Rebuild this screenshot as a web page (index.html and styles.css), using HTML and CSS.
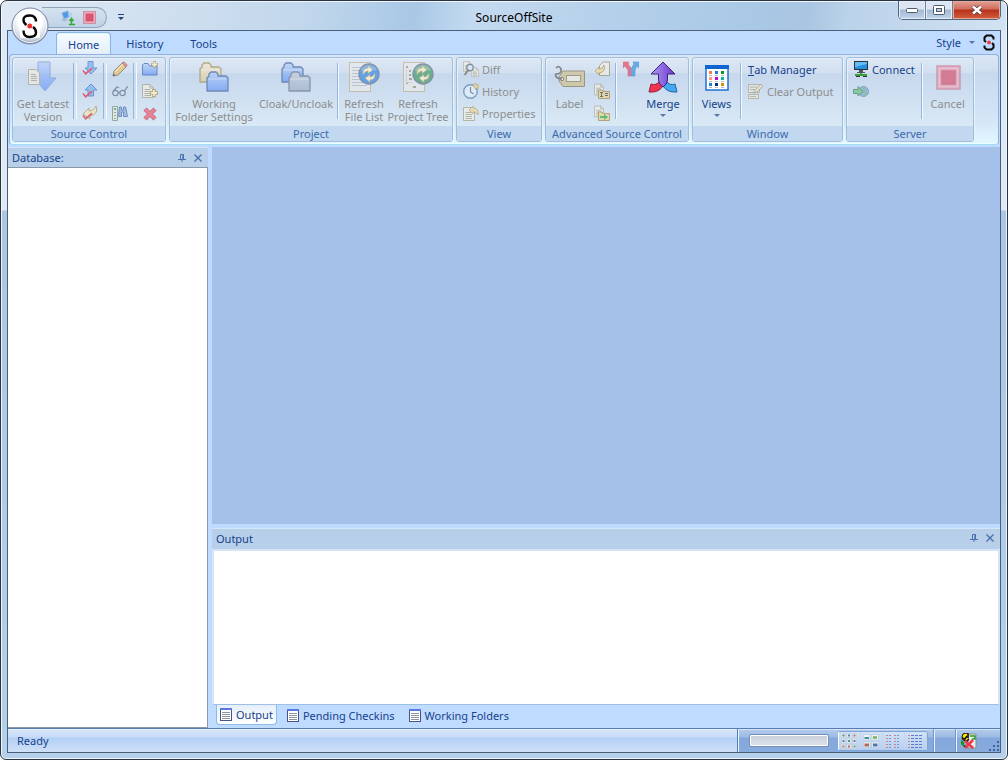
FILE: index.html
```html
<!DOCTYPE html>
<html lang="en">
<head>
  <meta charset="UTF-8" />
  <meta name="viewport" content="width=device-width, initial-scale=1.0" />
  <title>SourceOffSite</title>
  <link rel="stylesheet" href="styles.css">
</head>
<body>
  <!-- shared icons -->
  <svg class="defs" aria-hidden="true">
    <defs>
      <linearGradient id="g-blue" x1="0" y1="0" x2="0" y2="1"><stop offset="0" stop-color="#b8d0fa"/><stop offset="1" stop-color="#6797f6"/></linearGradient>
      <linearGradient id="g-tan" x1="0" y1="0" x2="0" y2="1"><stop offset="0" stop-color="#f3e9cf"/><stop offset="1" stop-color="#e2cd9b"/></linearGradient>
      <linearGradient id="g-gray" x1="0" y1="0" x2="0" y2="1"><stop offset="0" stop-color="#c6cedb"/><stop offset="1" stop-color="#a0afc4"/></linearGradient>
      <linearGradient id="g-purple" x1="0" y1="0" x2="1" y2="0"><stop offset="0" stop-color="#b09af5"/><stop offset="1" stop-color="#6a35c9"/></linearGradient>
      <radialGradient id="g-orb" cx=".5" cy=".35" r=".65"><stop offset=".5" stop-color="#ffffff"/><stop offset=".8" stop-color="#d3dae6"/><stop offset="1" stop-color="#8794ab"/></radialGradient>
      <symbol id="i-s" viewBox="0 0 12 17">
        <path d="M10.500 5.500V3.500L8.500 1.500H3.500L1.500 3.500V6.500L3 8M1.500 11.500V13.500L3.500 15.500H8.500L10.500 13.500V10.500L9 9" fill="none" stroke="#0a0a0a" stroke-width="2"/>
        <circle cx="6" cy="8.500" r="1.900" fill="#ee3b3b"/>
      </symbol>
      <symbol id="i-page" viewBox="0 0 12 14">
        <path d="M.5.5H8L11.500 4V13.500H.5Z" fill="#f1efe6" stroke="#a69f86"/>
        <path d="M8 .5V4H11.500M2.500 5.500H8M2.500 7.500H9M2.500 9.500H9M2.500 11.500H9" fill="none" stroke="#a19e86"/>
      </symbol>
      <symbol id="i-folder" viewBox="0 0 23 21">
        <path d="M1 20V7L3 5V3L5 1H10L12 3V5H20L22 7V20Z" stroke-width="1.300" stroke-linejoin="round"/>
        <path d="M2.500 8H20.500" fill="none" stroke="#fff" stroke-opacity=".5"/>
      </symbol>
      <symbol id="i-check" viewBox="0 0 12 8">
        <path d="M1 3.500L4 7L11 1" fill="none" stroke="#e02c48" stroke-width="1.800"/>
      </symbol>
      <symbol id="i-pin" viewBox="0 0 8 8">
        <path d="M0 5.500H8M2.500 5V.5H5.500V5M4.800.5V5M4 5.500V8" fill="none" stroke="#4a70ad"/>
      </symbol>
      <symbol id="i-x" viewBox="0 0 8 8">
        <path d="M.5.5L7.500 7.500M7.500.5L.5 7.500" fill="none" stroke="#4a70ad" stroke-width="1.400"/>
      </symbol>
      <symbol id="i-list" viewBox="0 0 12 13">
        <rect x=".5" y=".5" width="11" height="12" fill="#fff" stroke="#41558c"/>
        <path d="M0 1H12" stroke="#5878df" stroke-width="2"/>
        <path d="M2 4.500H10M2 6.500H10M2 8.500H10M2 10.500H10" stroke="#8f939b"/>
      </symbol>
      <symbol id="i-stop" viewBox="0 0 26 26">
        <rect x="1" y="1" width="24" height="24" fill="#e8a1b3" stroke="#cc7f96" stroke-width="1.500"/>
        <rect x="4" y="4" width="18" height="18" fill="#dd7088" stroke="#f3d0da"/>
        <rect x="6.500" y="6.500" width="13" height="13" fill="#d95570" stroke="#cf4c68"/>
      </symbol>
      <symbol id="i-cycle" viewBox="0 0 22 22">
        <circle cx="11" cy="11" r="10" stroke="#65718a" stroke-width="1.400"/>
        <path d="M3.500 7.500Q11 0 18 7" fill="none" stroke="#fff" stroke-opacity=".25" stroke-width="3"/>
        <path d="M5 12Q4 5 10 5V2.500L15 7L10 10.500V8Q7 8 5 12ZM17 10Q18 17 12 17V19.500L7 15L12 11.500V14Q15 14 17 10Z" fill="#fbeec9" stroke="#ab9560" stroke-width=".7"/>
      </symbol>
    </defs>
  </svg>

  <div class="window">
    <header class="titlebar">
      <div class="title-left">
        <div class="quick-access">
          <button class="qat-btn" aria-label="Connect">
            <svg width="16" height="16" viewBox="0 0 16 16"><path d="M2 3L8 1L9 7L4 9Z" fill="#4f9be6" stroke="#86b5e0"/><path d="M1 9L6 8L8 10L4 12Z" fill="#a9bdd6"/><path d="M8 2L12 3L12 8L9 7Z" fill="#b7cfe9"/><path d="M11.500 14V9M9.500 11L11.500 8.500L13.500 11M9 14.500H15" fill="none" stroke="#35a83a" stroke-width="1.500"/></svg>
          </button>
          <button class="qat-btn" aria-label="Cancel"><svg width="13" height="13"><use href="#i-stop"/></svg></button>
        </div>
        <button class="qat-more" aria-label="Customize"><svg width="6" height="6" viewBox="0 0 6 6"><path d="M0 0H6V1H0ZM0 3H6L3 6Z" fill="#26447d"/></svg></button>
      </div>
      <h1 class="title">SourceOffSite</h1>
      <div class="window-buttons">
        <button aria-label="Minimize"><svg width="12" height="6" viewBox="0 0 12 6"><rect x=".5" y="1.500" width="11" height="4" rx="1" fill="#fff" stroke="#4d5a6c"/></svg></button>
        <button aria-label="Maximize"><svg width="12" height="10" viewBox="0 0 12 10"><rect x=".5" y=".5" width="11" height="9" rx="1" fill="#fff" stroke="#4d5a6c"/><rect x="3.500" y="3.500" width="5" height="3" fill="#b9cfe7" stroke="#4d5a6c"/></svg></button>
        <button class="close" aria-label="Close"><svg width="12" height="10" viewBox="0 0 12 10"><path d="M2 1.500L10 8.500M10 1.500L2 8.500" stroke="#5b3a41" stroke-width="4"/><path d="M2 1.500L10 8.500M10 1.500L2 8.500" stroke="#fff" stroke-width="2.500"/></svg></button>
      </div>
    </header>

    <button class="orb" aria-label="Application menu">
      <svg width="38" height="38" viewBox="0 0 38 38"><circle cx="19" cy="19" r="18" fill="url(#g-orb)" stroke="#7786a3"/><circle cx="19" cy="19" r="16.500" fill="none" stroke="#fff" stroke-opacity=".8"/><rect x="9" y="8" width="20" height="23" fill="#fff"/><path d="M25 14.500Q25 8.500 19 8.500Q12.500 8.500 12.500 13Q12.500 16 15.500 18M12.500 23.500Q12.500 30 18.500 30Q25 30 25 25.500Q25 22 22 20" fill="none" stroke="#080808" stroke-width="2.400"/><circle cx="18.800" cy="19" r="2.500" fill="#ec3030"/></svg>
    </button>

    <div class="client">
      <nav class="tabs">
        <button class="tab active">Home</button>
        <button class="tab">History</button>
        <button class="tab">Tools</button>
        <button class="style-menu">Style <span class="arrow"></span></button>
        <svg class="brand" width="12" height="17"><use href="#i-s"/></svg>
      </nav>

      <div class="ribbon">
        <section class="group source-group">
          <div class="group-body">
            <button class="big w-60" disabled>
              <svg width="32" height="32" viewBox="0 0 32 32"><path d="M11 1H23V17H29L18 30L7 17H11Z" fill="url(#g-blue)" stroke="#7895d2"/><path d="M1.500 8.500H9L12.500 12V23.500H1.500Z" fill="#eeece3" stroke="#aaa289"/><path d="M4 13.500H9M4 15.500H10M4 17.500H10M4 19.500H10" stroke="#a6a492"/></svg>
              Get Latest<br>Version
            </button>
            <div class="stack">
              <button class="small" aria-label="Check Out" disabled><svg width="16" height="16" viewBox="0 0 16 16"><path d="M6 .5H11V7H15L9 13L3 7H6Z" fill="#7db1f0" stroke="#3f78c5"/><use href="#i-check" y="6" width="11" height="8"/></svg></button>
              <button class="small" aria-label="Check In" disabled><svg width="16" height="16" viewBox="0 0 16 16"><path d="M9 1L15 7H11.500V13H6V7H3Z" fill="#7db1f0" stroke="#3f78c5"/><use href="#i-check" y="7" width="11" height="8"/></svg></button>
              <button class="small" aria-label="Undo Check Out" disabled><svg width="16" height="16" viewBox="0 0 16 16"><path d="M1 9L7 3V6Q12 6 14 1Q17 9 8 11V14Z" fill="#f6e5b5" stroke="#a8935b"/><use href="#i-check" y="7" width="11" height="8"/></svg></button>
            </div>
            <div class="stack">
              <button class="small" aria-label="Edit" disabled><svg width="16" height="16" viewBox="0 0 16 16"><path d="M1 15L2 10L10 2L14 6L6 14Z" fill="#e8bf6b" stroke="#84714b"/><path d="M10 2L12 .8L15.200 4L14 6Z" fill="#df7376" stroke="#9e5e60"/><path d="M3 11L11 3" stroke="#fff3cc"/><path d="M1 15L1.500 12.500L3.500 14.500Z" fill="#333"/></svg></button>
              <button class="small" aria-label="View" disabled><svg width="16" height="16" viewBox="0 0 16 16" fill="none" stroke="#5c6d87" stroke-width="1.200"><circle cx="3.500" cy="10" r="2.700"/><circle cx="10.500" cy="10" r="2.700"/><path d="M6.200 9.500Q7 8.500 7.800 9.500M1 8.500L5 4L7 4.500M12.500 8L15 4L15.500 5"/></svg></button>
              <button class="small" aria-label="Find" disabled><svg width="16" height="16" viewBox="0 0 16 16"><path d="M.5 1.500H5.500V15.500H.5Z" fill="#e4ecdf" stroke="#7b8a82"/><path d="M2 4H4" stroke="#2dac50" stroke-width="2"/><path d="M2 7.500H4M2 10.500H4M2 13.500H4" stroke="#7b8a82"/><path d="M7.500 2H9.500V5H11.500V2H13.500L15.500 11.500H11.500V7H9.500V11.500H6.500Z" fill="#86ace5" stroke="#4b68a0"/></svg></button>
            </div>
            <div class="stack">
              <button class="small" aria-label="New Project" disabled><svg width="16" height="16" viewBox="0 0 16 16"><path d="M.5 14V4L2 2.500H6L7.500 5H15V14Z" fill="url(#g-blue)" stroke="#3b63b8"/><path d="M12.500 0V7M9 3.500H16" stroke="#a48c4b" stroke-width="2.500"/><path d="M12.500 1V6M10 3.500H15" stroke="#fff4c8" stroke-width="1.500"/></svg></button>
              <button class="small" aria-label="Add Files" disabled><svg width="16" height="16" viewBox="0 0 16 16"><use href="#i-page" x="0" y="1" width="12" height="14"/><path d="M12 6V14M8 10H16" stroke="#a68c4b" stroke-width="3.500"/><path d="M12 7V13M9 10H15" stroke="#fff0bd" stroke-width="1.800"/></svg></button>
              <button class="small" aria-label="Delete" disabled><svg width="16" height="16" viewBox="0 0 16 16"><path d="M3 4L13 14M13 4L3 14" stroke="#c93f53" stroke-width="4.500"/><path d="M3.500 4.500L12.500 13.500M12.500 4.500L3.500 13.500" stroke="#ee5c6e" stroke-width="2.500"/></svg></button>
            </div>
          </div>
          <h2 class="caption">Source Control</h2>
        </section>

        <section class="group project-group">
          <div class="group-body">
            <button class="big w-88" disabled>
              <svg width="32" height="32" viewBox="0 0 32 32"><use href="#i-folder" x="1" y="1" width="23" height="21" fill="url(#g-tan)" stroke="#a6925a"/><use href="#i-folder" x="8" y="10" width="23" height="21" fill="url(#g-blue)" stroke="#44659f"/></svg>
              Working<br>Folder Settings
            </button>
            <button class="big w-78" disabled>
              <svg width="32" height="32" viewBox="0 0 32 32"><use href="#i-folder" x="1" y="1" width="23" height="21" fill="url(#g-blue)" stroke="#44659f"/><use href="#i-folder" x="8" y="10" width="23" height="21" fill="url(#g-gray)" stroke="#6a788f"/></svg>
              Cloak/Uncloak
            </button>
            <span class="sep"></span>
            <button class="big w-50" disabled>
              <svg width="32" height="32" viewBox="0 0 32 32"><rect x="1.500" y="1.500" width="21" height="29" fill="#e9eaeb" stroke="#beb28f"/><path d="M4 6.500H14M4 9.500H12M4 12.500H12M4 15.500H13M4 18.500H19M4 21.500H19M4 24.500H19" stroke="#b3bbc6"/><use href="#i-cycle" x="10" y="2" width="22" height="22" fill="#328be9"/></svg>
              Refresh<br>File List
            </button>
            <button class="big w-58" disabled>
              <svg width="32" height="32" viewBox="0 0 32 32"><rect x="1.500" y="1.500" width="21" height="29" fill="#e9eaeb" stroke="#beb28f"/><path d="M4 6H6M7 10H9M7 14H9M7 18H10M4 22H6M11 26H14" stroke="#999574" stroke-width="2"/><path d="M4.500 8V21.500H10" fill="none" stroke="#ccc"/><use href="#i-cycle" x="10" y="2" width="22" height="22" fill="#3f9e6a"/></svg>
              Refresh<br>Project Tree
            </button>
          </div>
          <h2 class="caption">Project</h2>
        </section>

        <section class="group view-group">
          <div class="group-body">
            <div class="rows">
              <button class="row" disabled><svg width="16" height="16" viewBox="0 0 16 16"><use href="#i-page" width="9" height="11"/><use href="#i-page" x="8" y="6" width="8" height="10"/><circle cx="7" cy="6.500" r="3.200" fill="#dceafa" stroke="#5a6778" stroke-width="1.300"/><path d="M5 9.500L1.500 14" stroke="#6d6758" stroke-width="2"/></svg>Diff</button>
              <button class="row" disabled><svg width="16" height="16" viewBox="0 0 16 16"><circle cx="7.500" cy="8.500" r="6.800" fill="#e4f1fc" stroke="#5b84ad" stroke-width="1.400"/><path d="M7.500 4V9L10.500 11" fill="none" stroke="#516b88" stroke-width="1.200"/><path d="M10 1.500L13 0V2H16V5H13V7Z" fill="#f0d282" stroke="#a98f50" stroke-width=".7"/></svg>History</button>
              <button class="row" disabled><svg width="16" height="16" viewBox="0 0 16 16"><use href="#i-page" x="0" y="2" width="12" height="14"/><path d="M6 5L10 1V3Q16 3 15 10Q13 6 10 7V9Z" fill="#f0d896" stroke="#a98f50" stroke-width=".8"/></svg>Properties</button>
            </div>
          </div>
          <h2 class="caption">View</h2>
        </section>

        <section class="group advanced-group">
          <div class="group-body">
            <button class="big w-46" disabled>
              <svg width="32" height="32" viewBox="0 0 32 32"><path d="M5 16L9 10H30.500V25.500H9L5 20Z" fill="#d1c08f" stroke="#847956"/><rect x="12.500" y="14.500" width="14" height="6" fill="#f2eee0" stroke="#8d8262"/><circle cx="8" cy="18" r="1.700" fill="#f6f3e9" stroke="#73644b"/><path d="M8 18Q0 17 2 13Q8 13 7 8Q5 4 2 7" fill="none" stroke="#606163" stroke-width="1.700"/></svg>
              Label
            </button>
            <div class="stack plain">
              <button class="small" aria-label="Share" disabled><svg width="16" height="16" viewBox="0 0 16 16"><path d="M5.500 4.500L9 1H15.500V14.500H5.500Z" fill="#efede4" stroke="#96927a"/><path d="M1 10L5 6V8Q9 8 10 4Q12 11 5 12V14Z" fill="#f0d896" stroke="#a08646" stroke-width=".8"/></svg></button>
              <button class="small" aria-label="Rename" disabled><svg width="16" height="16" viewBox="0 0 16 16"><use href="#i-page" width="10" height="13"/><path d="M4.500 15.500V7H8L9 8.500H15.500V15.500Z" fill="#ead08c" stroke="#a08a4b"/><path d="M6 9.500H9M7.500 9.500V13.500M6 13.500H9M11 10.500H14M11 12.500H14" stroke="#444"/></svg></button>
              <button class="small" aria-label="Move" disabled><svg width="16" height="16" viewBox="0 0 16 16"><use href="#i-page" width="10" height="13"/><path d="M4.500 15.500V7H8L9 8.500H15.500V15.500Z" fill="#ead08c" stroke="#a08a4b"/><path d="M6 11H10V9L14 12L10 15V13H6Z" fill="#29ad41"/></svg></button>
            </div>
            <span class="sep"></span>
            <div class="stack plain branch">
              <button class="small" aria-label="Branch" disabled><svg width="16" height="16" viewBox="0 0 16 16"><path d="M0 1H6L5 3L8 7V15H5V9L2 5L0 7Z" fill="#e84860" stroke="#d8405a" stroke-width=".6"/><path d="M16 1H10L11 3L8.500 7V15H12V9L14 5L16 7Z" fill="#3495e2" stroke="#277cc5" stroke-width=".6"/></svg></button>
            </div>
            <button class="big w-36">
              <svg width="32" height="32" viewBox="0 0 32 32"><path d="M2 31L4 23Q9 25 13 20L16 25Q12 31 5 31Z" fill="#ee3450" stroke="#971c35"/><path d="M30 31L28 23Q23 25 19 20L16 25Q20 31 27 31Z" fill="#42a9f2" stroke="#22649f"/><path d="M16 1L28 13H20.500V19Q20.500 23 16 26Q11.500 23 11.500 19V13H4Z" fill="url(#g-purple)" stroke="#3e227e"/></svg>
              Merge
              <span class="arrow"></span>
            </button>
          </div>
          <h2 class="caption">Advanced Source Control</h2>
        </section>

        <section class="group window-group">
          <div class="group-body">
            <button class="big w-46">
              <svg width="32" height="32" viewBox="0 0 32 32"><rect x="5" y="5" width="22" height="24" fill="#fff" stroke="#1f72d4" stroke-width="1.500"/><path d="M4 6H28" stroke="#0f66d2" stroke-width="4"/><path d="M8 11.500H11" stroke-width="3" stroke="#ff7650"/><path d="M14 11.500H17" stroke-width="3" stroke="#1780d8"/><path d="M20 11.500H23" stroke-width="3" stroke="#0a9a22"/><path d="M8 17.500H11" stroke-width="3" stroke="#ff9490"/><path d="M14 17.500H17" stroke-width="3" stroke="#c606dc"/><path d="M20 17.500H23" stroke-width="3" stroke="#0db5a7"/><path d="M8 23.500H11" stroke-width="3" stroke="#1780d8"/><path d="M14 23.500H17" stroke-width="3" stroke="#062c9c"/><path d="M20 23.500H23" stroke-width="3" stroke="#d0920d"/><path d="M8 14.500H11M14 14.500H17M20 14.500H23M8 20.500H11M14 20.500H17M20 20.500H23M8 26.500H11M14 26.500H17M20 26.500H23" stroke="#bbb"/></svg>
              Views
              <span class="arrow"></span>
            </button>
            <span class="sep"></span>
            <div class="rows">
              <button class="row"><span class="key">T</span>ab Manager</button>
              <button class="row" disabled><svg width="16" height="16" viewBox="0 0 16 16"><path d="M.5 1.500H11.500V9.500H.5ZM.5 11.500H10.500V15.500H.5Z" fill="#eae9e3" stroke="#aaa389"/><path d="M2 4H9M2 6.500H7M2 13.500H8" stroke="#aaa389"/><path d="M5 10L7 7L13 1L15 3L9 9Z" fill="#ecdfbf" stroke="#9a9274" stroke-width=".8"/></svg>Clear Output</button>
            </div>
          </div>
          <h2 class="caption">Window</h2>
        </section>

        <section class="group server-group">
          <div class="group-body">
            <div class="rows">
              <button class="row"><svg width="16" height="16" viewBox="0 0 16 16"><rect x="1.500" y=".5" width="13" height="8" fill="#258fe0" stroke="#28313c"/><path d="M2 1H14V3L2 6Z" fill="#62bdf6"/><path d="M6 9H10V11H12V12H4V11H6Z" fill="#4e555e"/><path d="M2 14H14M8 12V14" stroke="#3a9f38" stroke-width="2"/><path d="M3 15.500H7M10 15.500H14" stroke="#303a35"/></svg>Connect</button>
              <button class="row" aria-label="Disconnect" disabled><svg width="16" height="16" viewBox="0 0 16 16"><circle cx="10.500" cy="8.500" r="5" fill="#7fabd8" stroke="#6488ad"/><path d="M9 4Q13 5 12 8Q15 10 12 13" fill="#75b07e"/><path d="M.5 6.500H5V3.500L10 8.500L5 13V10.500H.5Z" fill="#6cc083" stroke="#3e8753"/></svg></button>
            </div>
            <span class="sep"></span>
            <button class="big w-50" disabled>
              <svg width="32" height="32" viewBox="0 0 32 32"><use href="#i-stop" x="4" y="4" width="25" height="25"/></svg>
              Cancel
            </button>
          </div>
          <h2 class="caption">Server</h2>
        </section>
      </div>

      <main class="workspace">
        <aside class="database">
          <div class="pane-head">
            <h2>Database:</h2>
            <button aria-label="Auto hide"><svg width="8" height="8"><use href="#i-pin"/></svg></button>
            <button aria-label="Close"><svg width="8" height="8"><use href="#i-x"/></svg></button>
          </div>
          <div class="tree"></div>
        </aside>
        <div class="right">
          <div class="documents"></div>
          <section class="output">
            <div class="pane-head">
              <h2>Output</h2>
              <button aria-label="Auto hide"><svg width="8" height="8"><use href="#i-pin"/></svg></button>
              <button aria-label="Close"><svg width="8" height="8"><use href="#i-x"/></svg></button>
            </div>
            <div class="log"></div>
            <div class="pane-tabs">
              <button class="active"><svg width="12" height="13"><use href="#i-list"/></svg>Output</button>
              <button><svg width="12" height="13"><use href="#i-list"/></svg>Pending Checkins</button>
              <button><svg width="12" height="13"><use href="#i-list"/></svg>Working Folders</button>
            </div>
          </section>
        </div>
      </main>

      <footer class="status">
        <span class="status-text">Ready</span>
        <div class="status-right">
          <div class="progress-cell"><div class="progress" role="progressbar" aria-label="Progress"></div></div>
          <div class="view-modes">
            <button aria-label="Large icons"><svg width="16" height="16" viewBox="0 0 16 16"><path d="M.5.5H4.500V4.500H.5ZM6 .5H10V4.500H6ZM11.500.5H15.500V4.500H11.500ZM.5 6H4.500V10H.5ZM6 6H10V10H6ZM11.500 6H15.500V10H11.500ZM.5 11.500H4.500V15.500H.5ZM6 11.500H10V15.500H6ZM11.500 11.500H15.500V15.500H11.500Z" fill="#eef2f4" stroke="#bac8d8" stroke-width=".6"/><path d="M1.500 2.500H3.500M7 8H9M12.500 13.500H14.500" stroke="#52986f" stroke-width="2"/><path d="M7 2.500H9M1.500 8H3.500M12.500 8H14.500" stroke="#587fae" stroke-width="2"/><path d="M12.500 2.500H14.500M1.500 13.500H3.500M7 13.500H9" stroke="#ba695e" stroke-width="2"/></svg></button>
            <button aria-label="Small icons"><svg width="16" height="16" viewBox="0 0 16 16"><path d="M.5 1.500H7V7H.5ZM9 1.500H15.500V7H9ZM.5 9H7V14.500H.5ZM9 9H15.500V14.500H9Z" fill="#eef2f4" stroke="#bac8d8" stroke-width=".6"/><path d="M1.500 5H6" stroke="#3a969a" stroke-width="2"/><path d="M10 4.500H14" stroke="#78b44c" stroke-width="2.500"/><path d="M1.500 12H6" stroke="#ad6c5b" stroke-width="3"/><path d="M10 12H14.500" stroke="#4779aa" stroke-width="3"/></svg></button>
            <button aria-label="List"><svg width="16" height="16" viewBox="0 0 16 16"><path d="M2 2V15M10 2V15" stroke="#d57f87" stroke-width="2" stroke-dasharray="1 2"/><path d="M5 2V15M13 2V15" stroke="#7d92d3" stroke-width="2" stroke-dasharray="1 2"/></svg></button>
            <button aria-label="Details"><svg width="16" height="16" viewBox="0 0 16 16"><path d="M2 2V15" stroke="#d57f87" stroke-width="2" stroke-dasharray="1 2"/><path d="M5.500 2V15M9.500 2V15M13.500 2V15" stroke="#6079d2" stroke-width="3" stroke-dasharray="1 2"/></svg></button>
          </div>
          <span class="status-sep blank"></span>
          <span class="status-sep"></span>
          <svg class="offline" width="16" height="16" viewBox="0 0 16 16"><circle cx="5" cy="4" r="4" fill="#f7e500" stroke="#111"/><path d="M8 1H15V15H7V8Z" fill="#eceee5" stroke="#8a8e88"/><path d="M0 7L3 9V12L7 15H4L0 11Z" fill="#16951a"/><path d="M1 5L4 6L6 3M7 1V5M8 6L5 9M3 13L6 14" fill="none" stroke="#111" stroke-width="1.500"/><path d="M9 3H14V6H11" fill="none" stroke="#269c38" stroke-width="1.500"/><path d="M4 8L12 15M12 7L4 15" stroke="#ee3852" stroke-width="2.600"/></svg>
          <svg class="grip" width="11" height="11" viewBox="0 0 11 11"><path d="M8 0H10V2H8ZM8 4H10V6H8ZM8 8H10V10H8ZM4 4H6V6H4ZM4 8H6V10H4ZM0 8H2V10H0Z" fill="#3f64a4"/></svg>
        </div>
      </footer>
    </div>
  </div>
</body>
</html>
```
FILE: styles.css
```css
* {
  box-sizing: border-box;
}
body {
  margin: 0;
  background: #fff;
  font-family: "Noto Sans", "Open Sans", sans-serif;
  font-size: 11px;
  line-height: 13px;
  color: #15428b;
}
h1, h2 {
  margin: 0;
  font-size: 11px;
  font-weight: normal;
}
button {
  font: inherit;
  color: inherit;
  background: none;
  border: 0;
  padding: 0;
  white-space: nowrap;
}
button:disabled {
  color: #8d8d8d;
}
button:disabled svg {
  opacity: .7;
}
svg {
  display: block;
  flex: none;
}
.defs {
  position: absolute;
  width: 0;
  height: 0;
}

/* window frame */
.window {
  position: relative;
  display: flex;
  flex-direction: column;
  min-height: 100vh;
  padding: 0 6px 6px;
  border: 1px solid #2b3440;
  border-radius: 7px 7px 6px 6px;
  box-shadow: inset 0 0 0 1px #eef6fd;
  background: linear-gradient(#dce8f5 0, #dfeaf6 209px, #a9c6e5 210px, #b4d0ea 100%);
}
.titlebar {
  display: grid;
  grid-template-columns: 1fr auto 1fr;
  height: 28px;
  margin: 1px -5px 0;
  padding: 0 5px 0 25px;
  border-radius: 6px 6px 0 0;
  background: linear-gradient(100deg, #dfe9f4 0, #c2d7ec 30%, #a9c8e6 41%, #c3daf0 47%, #b5d0ea 60%, #a9c9e6 74%, #a9c5e1 80%, #bad2ea 84%, #d2e2f2 100%);
}
.title-left {
  display: flex;
  align-items: flex-start;
  margin-left: 15px;
}
.quick-access {
  display: flex;
  align-items: center;
  gap: 7px;
  height: 21px;
  margin-top: 5px;
  padding: 0 10px 0 18px;
  border: 1px solid #8fa3bd;
  border-left: 0;
  border-radius: 0 11px 11px 0;
  background: linear-gradient(#d5e2f0, #bfd2e6);
}
.qat-more {
  margin: 12px 0 0 11px;
}
.title {
  padding-top: 8px;
  font-size: 12px;
  line-height: 15px;
  color: #000;
}
.window-buttons {
  justify-self: end;
  display: flex;
  height: 19px;
  margin-top: -1px;
  border: 1px solid #55667c;
  border-top: 0;
  border-radius: 0 0 5px 5px;
  overflow: hidden;
}
.window-buttons button {
  display: grid;
  place-items: center;
  width: 27px;
  border-right: 1px solid #6f829a;
  background: linear-gradient(#dbe6f2 45%, #a3b9d2 50%, #c1d5ea);
  box-shadow: inset 0 0 0 1px #e4eef8;
}
.window-buttons .close {
  width: 47px;
  border-right: 0;
  background: linear-gradient(#e2a298 0, #cf6d5b 45%, #b8301b 50%, #d2603d 100%);
  box-shadow: inset 0 0 0 1px #e6a998;
}
.orb {
  position: absolute;
  left: 10px;
  top: 6px;
  border-radius: 50%;
}

/* ribbon */
.client {
  flex: 1;
  display: flex;
  flex-direction: column;
  border: 1px solid #4b5f78;
  background: #bfdbff;
}
.tabs {
  display: flex;
  height: 23px;
  padding: 1px 5px 0 48px;
}
.tab {
  padding: 0 11px;
  border: 1px solid transparent;
  border-bottom: 0;
  margin-right: 3px;
}
.tab.active {
  margin-bottom: -1px;
  border-color: #8db2e3;
  border-radius: 4px 4px 0 0;
  background: linear-gradient(#f7fbff, #e3edfa);
  box-shadow: inset 0 0 0 1px #d9fbff;
}
.style-menu {
  display: flex;
  align-items: center;
  gap: 8px;
  height: 20px;
  margin-left: auto;
}
.brand {
  margin: 2px 0 0 8px;
}
.arrow {
  width: 0;
  height: 0;
  border: 3px solid transparent;
  border-top-color: #5877a8;
  border-bottom: 0;
}
.ribbon {
  display: flex;
  gap: 3px;
  height: 91px;
  margin: 0 1px;
  padding: 2px;
  border: 1px solid #8db2e3;
  border-bottom-color: #a5dcf0;
  border-radius: 4px;
  background: linear-gradient(#dbe6f4 0, #d0dff0 18%, #c8d9ed 19%, #d5e6f7 75%, #e3f8ff 100%);
  box-shadow: inset 0 -1px #e8ffff;
}
.group {
  display: flex;
  flex-direction: column;
  height: 85px;
  border: 1px solid #9ebfdb;
  border-radius: 3px;
  background: linear-gradient(#dee8f5 0, #d1dff0 18%, #c7d8ed 19%, #d8e8f5 80%);
  box-shadow: 1px 1px #e7f3fd, inset 1px 1px #e7f0fa;
}
.source-group { width: 154px; }
.project-group { width: 284px; }
.view-group { width: 86px; }
.advanced-group { width: 144px; }
.window-group { width: 151px; }
.server-group { width: 128px; }
.group-body {
  flex: 1;
  display: flex;
}
.caption {
  height: 15px;
  border-radius: 0 0 2px 2px;
  text-align: center;
  line-height: 15px;
  color: #3e6aaa;
  background: #c1d8f0;
}
.big {
  flex: none;
  display: flex;
  flex-direction: column;
  align-items: center;
  padding-top: 3px;
}
.big svg {
  margin-bottom: 4px;
}
.big .arrow {
  margin-top: 4px;
}
.w-36 { width: 36px; }
.w-46 { width: 47px; }
.w-50 { width: 50px; }
.w-58 { width: 58px; }
.w-60 { width: 60px; }
.w-78 {
  width: 79px;
  padding-right: 3px;
}
.w-88 { width: 88px; }
.stack {
  position: relative;
  display: flex;
  flex-direction: column;
  width: 30px;
  padding-left: 3px;
}
.stack.plain {
  width: 22px;
  padding: 0 4px 0 0;
}
.stack.branch {
  width: 28px;
  padding: 0;
}
.small {
  display: grid;
  place-items: center;
  height: 22px;
}
.sep, .stack:not(.plain)::before {
  width: 2px;
  height: 56px;
  border-left: 1px solid #97b6dc;
  border-right: 1px solid #f2f8ff;
}
.sep {
  margin-top: 5px;
}
.stack:not(.plain)::before {
  content: "";
  position: absolute;
  left: 0;
  top: 5px;
}
.rows {
  padding: 0 6px;
}
.row {
  display: flex;
  align-items: center;
  height: 22px;
}
.row svg {
  margin-right: 3px;
}
.key {
  text-decoration: underline;
}

/* docked panes */
.workspace {
  flex: 1;
  display: flex;
  gap: 4px;
  padding-top: 2px;
}
.pane-head {
  display: flex;
  align-items: center;
  gap: 8px;
  height: 20px;
  padding: 0 6px 0 4px;
  border-top: 1px solid #d4e6fa;
  background: #b8cfe9;
}
.pane-head h2 {
  flex: 1;
}
.database {
  display: flex;
  flex-direction: column;
  width: 200px;
}
.tree {
  flex: 1;
  border: 1px solid #8b98aa;
  border-left: 0;
  background: #fff;
}
.right {
  flex: 1;
  display: flex;
  flex-direction: column;
  gap: 4px;
}
.documents {
  flex: 1;
  background: #a5c0e9;
}
.output .pane-head {
  height: 21px;
  padding-bottom: 2px;
}
.log {
  height: 156px;
  border: 2px solid #d5e4f5;
  border-bottom: 1px solid #9fc0e6;
  background: #fff;
}
.pane-tabs {
  display: flex;
  height: 23px;
  padding: 0 4px 3px;
}
.pane-tabs button {
  display: flex;
  align-items: center;
  gap: 4px;
  padding: 0 4px;
  margin-right: 6px;
}
.pane-tabs .active {
  border: 1px solid #8bbdea;
  border-top: 0;
  border-radius: 0 0 4px 4px;
  padding: 0 3px;
  background: linear-gradient(#e5effa, #fff);
}

/* status bar */
.status {
  display: flex;
  align-items: stretch;
  height: 24px;
  border-top: 1px solid #567db1;
  background: linear-gradient(#fff 0, #d7e6f9 1px, #c7dcf8 8px, #b3d0f5 9px, #cfe1f8 100%);
}
.status-text {
  flex: 1;
  padding-left: 9px;
  line-height: 23px;
}
.status-right {
  display: flex;
  align-items: center;
  border-left: 1px solid #567db1;
  background: linear-gradient(#fff 0, #b1c9ec 1px, #9dbbe5 8px, #84a8dc 9px, #88abdd 100%);
  box-shadow: inset 1px 0 #eaf3ff;
}
.progress-cell {
  padding: 0 9px 0 11px;
}
.progress {
  width: 80px;
  height: 13px;
  border: 1px solid #7590b8;
  border-radius: 2px;
  box-shadow: inset 0 0 0 1px #fff;
  background: linear-gradient(#c9cfda, #dde1e9);
}
.view-modes {
  display: flex;
  border: 1px solid #7fa4d6;
  border-left-color: #fff;
  border-radius: 3px;
  background: linear-gradient(#d1e2f7, #b6cfef);
}
.view-modes button {
  padding: 1px 3px 1px 2px;
  border-right: 1px solid #c1d5ef;
}
.status-sep {
  align-self: stretch;
  width: 2px;
  border-left: 1px solid #7397ca;
  border-right: 1px solid #e8f2ff;
}
.status-sep.blank {
  margin: 0 20px 0 5px;
}
.offline {
  margin-left: 4px;
}
.grip {
  align-self: flex-end;
  margin-left: 12px;
}
```
